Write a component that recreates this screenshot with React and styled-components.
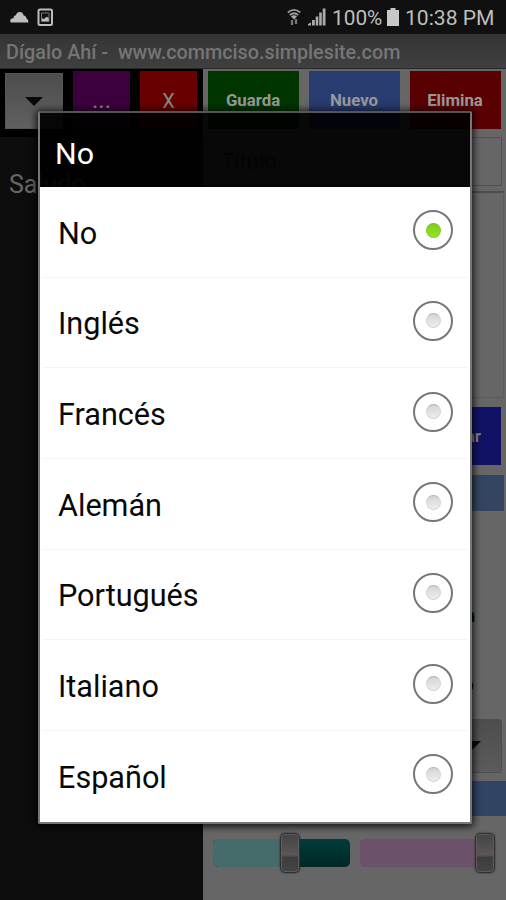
import React, { useState } from 'react';
import styled, { createGlobalStyle } from 'styled-components';

const LANGUAGES = [
  'No',
  'Inglés',
  'Francés',
  'Alemán',
  'Portugués',
  'Italiano',
  'Español',
];

const StatusBar = () => (
  <StatusContainer>
    <StatusGroup>
      <svg width="19" height="12" viewBox="0 0 19 12" fill="#bdbdbd">
        <path d="M.8 11.500Q-.5 9 1.200 7.800Q2.500 7 3.500 7.300Q3.500 4.500 6 4.300Q6.800 1 9.800 1Q13 1.200 13.600 4.600Q16 4.600 16.500 7.500Q18.800 8.500 18.300 11.500Z" />
      </svg>
      <svg width="17" height="19" viewBox="0 0 17 19">
        <rect
          x="1.5"
          y="1.5"
          width="13.5"
          height="15.5"
          rx="1.5"
          fill="none"
          stroke="#bdbdbd"
          strokeWidth="2"
        />
        <path
          d="M4.500 13.500V10L7 11L9.500 8.800L12 10V13.500Z"
          fill="#bdbdbd"
        />
        <path d="M4.500 5H12V13.500H4.500Z" fill="none" stroke="#777" />
      </svg>
    </StatusGroup>
    <StatusGroup $right>
      <svg width="14" height="18" viewBox="0 0 14 18" fill="none">
        <path
          d="M.8 4.500Q7-.8 13.200 4.500M2.800 7Q7 3.500 11.200 7"
          stroke="#999"
          strokeWidth="1.7"
        />
        <path d="M4 8.500Q7 6 10 8.500L7 11.500Z" fill="#aaa" />
        <path d="M5 12V17M9 11V16" stroke="#777" strokeWidth="2.300" />
      </svg>
      <SignalIcon width="18" height="18" viewBox="0 0 18 18" fill="#aaa">
        <path d="M0 17.500V16L3 14.500V17.500ZM4 17.500V12H6.800V17.500ZM7.700 17.500V8.500H10.300V17.500ZM11.200 17.500V4.500H13.800V17.500ZM14.700 17.500V.5H17.500V17.500Z" />
      </SignalIcon>
      <StatusText>100%</StatusText>
      <svg width="12" height="18" viewBox="0 0 12 18" fill="#c8c8c8">
        <path d="M3.500 0H8.500V2H12V18H0V2H3.500Z" />
      </svg>
      <StatusText $clock>10:38 PM</StatusText>
    </StatusGroup>
  </StatusContainer>
);

const Slider = ({ track, fill, fillWidth, width }) => (
  <SliderTrack $color={track} $width={width}>
    <SliderFill $color={fill} $width={fillWidth} />
    <SliderThumb />
  </SliderTrack>
);

const LanguageDialog = ({ selected, onSelect }) => (
  <DialogContainer>
    <DialogTitle>{selected}</DialogTitle>
    <OptionList>
      {LANGUAGES.map(language => (
        <OptionRow key={language} onClick={() => onSelect(language)}>
          <span>{language}</span>
          <RadioCircle>
            <RadioDot $checked={selected === language} />
          </RadioCircle>
        </OptionRow>
      ))}
    </OptionList>
  </DialogContainer>
);

const App = () => {
  const [selected, setSelected] = useState('No');

  return (
    <Screen>
      <GlobalStyle />
      <StatusBar />
      <TitleBar>Dígalo Ahí -&nbsp; www.commciso.simplesite.com</TitleBar>
      <Content>
        <PhrasePanel>
          <PhraseToolbar>
            <DropButton>
              <svg width="18" height="10" viewBox="0 0 18 10">
                <path d="M0 0H18L9 9Z" fill="#080808" />
              </svg>
            </DropButton>
            <ToolButton $color="#3c003c" $dots>
              ...
            </ToolButton>
            <ToolButton $color="#690000">X</ToolButton>
          </PhraseToolbar>
          <Phrase>Saludo</Phrase>
        </PhrasePanel>
        <EditPanel>
          <ActionRow>
            <ActionButton $color="#003500">Guarda</ActionButton>
            <ActionButton $color="#293c70">Nuevo</ActionButton>
            <ActionButton $color="#590003">Elimina</ActionButton>
          </ActionRow>
          <TitleField>Título</TitleField>
          <TextField />
          <SpeakButton>Hablar</SpeakButton>
          <SectionBar $color="#34465f" $height={36} />
          <OptionLabels>
            <OptionLabel>Traducción</OptionLabel>
            <OptionLabel $inset={1}>Tono</OptionLabel>
          </OptionLabels>
          <Spinner>
            <svg width="18" height="10" viewBox="0 0 18 10">
              <path d="M0 0H18L9 9Z" fill="#080808" />
            </svg>
          </Spinner>
          <SectionBar $color="#304464" $height={35} $full />
          <SliderRow>
            <Slider
              width={137}
              track="linear-gradient(#003d3b, #002725)"
              fill="#456b6b"
              fillWidth={67}
            />
            <Slider
              width={135}
              track="#6b526a"
              fill="#6b526a"
              fillWidth={115}
            />
          </SliderRow>
        </EditPanel>
      </Content>
      <LanguageDialog selected={selected} onSelect={setSelected} />
    </Screen>
  );
};

export default App;

const GlobalStyle = createGlobalStyle`
  * {
    box-sizing: border-box;
  }

  body {
    margin: 0;
    background: #0d0d0d;
    font-family: Roboto, sans-serif;
  }
`;

const Screen = styled.div`
  position: relative;
  display: flex;
  flex-direction: column;
  width: 506px;
  height: 900px;
  overflow: hidden;
`;

const StatusContainer = styled.header`
  display: flex;
  justify-content: space-between;
  height: 34px;
  padding: 0 11px 0 10px;
  background: #101010;
`;

const StatusGroup = styled.div`
  display: flex;
  align-items: center;
  gap: ${({ $right }) => ($right ? '0' : '8px')};
`;

const SignalIcon = styled.svg`
  margin: 0 6px 0 7px;
`;

const StatusText = styled.span`
  width: ${({ $clock }) => ($clock ? '90px' : '52px')};
  margin: ${({ $clock }) => ($clock ? '2px 0 0 6px' : '2px 3px 0 0')};
  color: #bebebe;
  font-size: ${({ $clock }) => ($clock ? '21.1px' : '20.8px')};
  line-height: 32px;
  white-space: nowrap;
`;

const TitleBar = styled.div`
  height: 35px;
  padding-left: 6px;
  background: linear-gradient(#343434, #404040);
  border-bottom: 1px solid #292929;
  color: #757575;
  font-size: 19.8px;
  font-weight: 500;
  line-height: 37px;
  white-space: nowrap;
`;

const Content = styled.main`
  display: flex;
  flex: 1;
`;

const PhrasePanel = styled.section`
  width: 203px;
  background: #0d0d0d;
`;

const PhraseToolbar = styled.div`
  display: flex;
  gap: 10px;
  height: 68px;
  padding: 2px 5px;
  background: #000;
`;

const DropButton = styled.button`
  display: flex;
  align-items: center;
  justify-content: center;
  width: 58px;
  height: 56px;
  margin-top: 2px;
  padding: 1px 0 0;
  border: 1px solid #565656;
  background: linear-gradient(#4d4d4d, #606060);
`;

const ToolButton = styled.button`
  width: 57px;
  height: 58px;
  padding: ${({ $dots }) => ($dots ? '0' : '2px 0 0')};
  border: 0;
  background: ${({ $color }) => $color};
  color: #888;
  font-family: inherit;
  font-size: ${({ $dots }) => ($dots ? '24px' : '20px')};
`;

const Phrase = styled.div`
  padding: 30px 0 0 9px;
  color: #666;
  font-size: 25px;
  line-height: 35px;
`;

const EditPanel = styled.section`
  flex: 1;
  background: #666;
`;

const ActionRow = styled.div`
  display: flex;
  gap: 10px;
  height: 68px;
  padding: 2px 5px;
`;

const ActionButton = styled.button`
  width: 91px;
  height: 58px;
  padding: 0 1px 0 0;
  border: 0;
  background: ${({ $color }) => $color};
  color: #989898;
  font-family: inherit;
  font-size: 16.8px;
  font-weight: 700;
`;

const TitleField = styled.div`
  height: 49px;
  margin-right: 4px;
  padding-left: 17px;
  border: 1px solid #505050;
  color: #2f2f2f;
  font-size: 22px;
  line-height: 47px;
`;

const TextField = styled.div`
  height: 207px;
  margin: 5px 2px 9px 0;
  border: 1px solid #5b5b5b;
  border-top: 2px solid #4c4c4c;
`;

const SpeakButton = styled.button`
  display: block;
  width: 293px;
  height: 58px;
  margin: 0 0 10px 5px;
  padding: 0 20px 0 0;
  border: 0;
  background: #111265;
  color: #808080;
  font-family: inherit;
  font-size: 17px;
  font-weight: 700;
  text-align: right;
`;

const SectionBar = styled.div`
  height: ${({ $height }) => $height}px;
  margin-right: ${({ $full }) => ($full ? 0 : '2px')};
  background: ${({ $color }) => $color};
`;

const OptionLabels = styled.div`
  display: flex;
  flex-direction: column;
  align-items: flex-end;
  gap: 48px;
  height: 208px;
  padding: 94px 31px 0 0;
`;

const OptionLabel = styled.span`
  padding-right: ${({ $inset = 0 }) => $inset}px;
  color: #080808;
  font-size: 18px;
  font-weight: 700;
  line-height: 21px;
`;

const Spinner = styled.div`
  display: flex;
  align-items: center;
  justify-content: flex-end;
  height: 54px;
  margin: 0 4px 8px 5px;
  padding-right: 20px;
  border: 1px solid #4d4d4d;
  border-radius: 3px;
  background: linear-gradient(#4d4d4d, #5b5b5b);
`;

const SliderRow = styled.div`
  display: flex;
  gap: 10px;
  padding: 23px 0 0 10px;
`;

const SliderTrack = styled.div`
  display: flex;
  align-items: center;
  width: ${({ $width }) => $width}px;
  height: 28px;
  border-radius: 5px;
  background: ${({ $color }) => $color};
`;

const SliderFill = styled.div`
  flex: 0 0 ${({ $width }) => $width}px;
  height: 28px;
  border-radius: 5px 0 0 5px;
  background: ${({ $color }) => $color};
`;

const SliderThumb = styled.div`
  flex: 0 0 20px;
  height: 40px;
  border: 1px solid #303030;
  border-radius: 5px;
  background: linear-gradient(#444, #5b5655 55%, #3d3d3d 62%, #454545);
  box-shadow:
    inset 0 0 0 1px #5c5c5c,
    0 0 2px #292929;
`;

const DialogContainer = styled.div`
  position: absolute;
  top: 111px;
  left: 38px;
  width: 434px;
  height: 713px;
  border: 2px solid #777;
  border-top-color: #555;
  border-radius: 2px;
  box-shadow: 0 1px 7px 2px rgba(0, 0, 0, 0.75);
`;

const DialogTitle = styled.div`
  height: 74px;
  padding-left: 15px;
  background: rgba(0, 0, 0, 0.92);
  color: #fff;
  font-size: 30.4px;
  line-height: 82px;
`;

const OptionList = styled.div`
  height: 635px;
  background: #fff;
`;

const OptionRow = styled.div`
  display: flex;
  align-items: center;
  justify-content: space-between;
  height: 90.67px;
  margin: 0 2px;
  padding: 0 15px 3px 16px;
  border-bottom: 1px solid #f4f4f4;
  color: #080808;
  font-size: 30.6px;
  line-height: 40px;
  cursor: pointer;

  &:last-child {
    border-bottom-color: transparent;
  }

  span {
    padding-top: 7px;
  }
`;

const RadioCircle = styled.div`
  display: flex;
  align-items: center;
  justify-content: center;
  width: 40px;
  height: 40px;
  border: 2px solid #777;
  border-radius: 50%;
`;

const RadioDot = styled.div`
  width: 15px;
  height: 15px;
  border: 1px solid ${({ $checked }) => ($checked ? '#83c92c' : '#d4d4d4')};
  border-top-color: ${({ $checked }) => ($checked ? '#77b52c' : '#b4b4b4')};
  border-radius: 50%;
  background: ${({ $checked }) =>
    $checked
      ? 'linear-gradient(#80cf17, #92e323)'
      : 'linear-gradient(#d4d4d4, #eee)'};
`;
